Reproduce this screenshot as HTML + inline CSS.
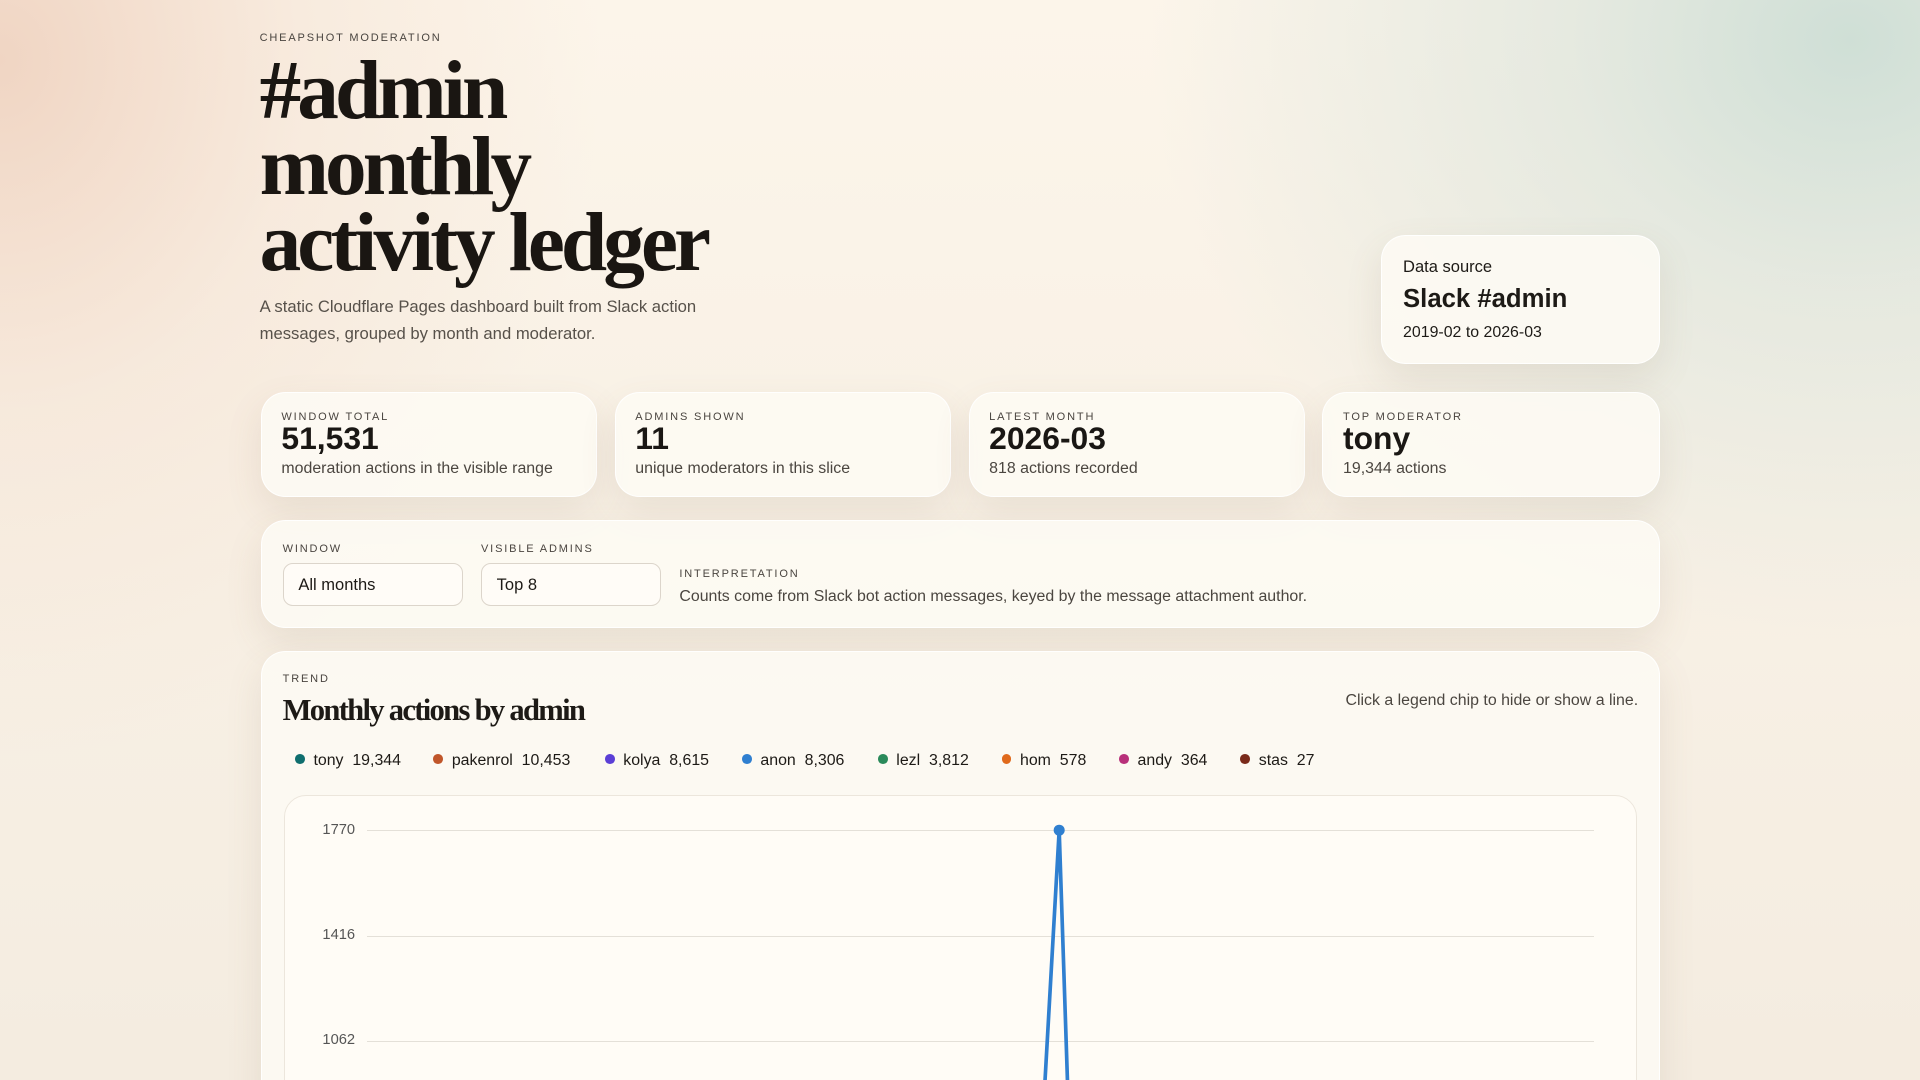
<!DOCTYPE html>
<html><head><meta charset="utf-8"><style>
html,body{margin:0;width:1920px;height:1080px;overflow:hidden}
body{background:#f8efe3;font-family:"Liberation Sans",sans-serif;color:#1d1a16;position:relative}
#bg{position:absolute;left:0;top:0;width:1920px;height:1080px;
background:radial-gradient(ellipse 700px 600px at 1850px 40px,#cfdfd6 0%,rgba(215,226,218,.6) 40%,rgba(250,244,234,0) 100%),
radial-gradient(ellipse 600px 700px at 0px 60px,#f0d5c3 0%,rgba(244,225,210,.5) 50%,rgba(250,244,234,0) 100%),
linear-gradient(180deg,#fcf5ea,#f4ece0)}
#w{position:absolute;left:0;top:0;width:1568px;height:882px;zoom:1.22449;overflow:hidden}
.a{position:absolute}
.card{position:absolute;background:rgba(253,250,244,.88);border:1px solid rgba(255,255,255,.9);border-radius:20px;box-shadow:0 12px 30px rgba(120,100,70,.12)}
.lab{font-size:9px;letter-spacing:1.5px;color:#4a4540}
.big{font-size:26px;font-weight:bold;color:#1a1714;line-height:26px}
.sub{font-size:13px;color:#4b4640}
.sel{position:absolute;width:147px;height:35px;border:1px solid #dcd5cb;border-radius:8px;background:#fffcf7;font-size:13.5px;line-height:35px;padding-left:12px;box-sizing:border-box}
.chip{position:absolute;top:614px;font-size:13px;color:#1d1a16}
.chip i{display:inline-block;width:8px;height:8px;border-radius:50%;margin-right:7px;vertical-align:1px}
.gl{position:absolute;left:300px;width:1002px;height:1px;background:#e4e0d8}
.yl{position:absolute;width:58px;left:232px;text-align:right;font-size:12px;color:#555}
</style></head><body><div id="bg"></div><div id="w">
<div class="a lab" style="left:212px;top:26px">CHEAPSHOT MODERATION</div>
<div class="a" style="left:212px;top:44px;font-family:'Liberation Serif',serif;font-weight:bold;font-size:68px;line-height:62px;letter-spacing:-3.2px;color:#1a1612">#admin<br>monthly<br>activity ledger</div>
<div class="a" style="left:212px;top:240px;font-size:13.6px;line-height:22px;color:#57514a;width:370px">A static Cloudflare Pages dashboard built from Slack action messages, grouped by month and moderator.</div>
<div class="card" style="left:1128px;top:192px;width:226px;height:104px">
<div class="a" style="left:17px;top:17px;font-size:13.5px">Data source</div>
<div class="a" style="left:17px;top:40px;font-size:21px;font-weight:bold">Slack #admin</div>
<div class="a" style="left:17px;top:72px;font-size:13px">2019-02 to 2026-03</div></div>
<div class="card" style="left:213px;top:320px;width:273px;height:84px"><div class="a lab" style="left:16px;top:15px">WINDOW TOTAL</div><div class="a big" style="left:16px;top:25px">51,531</div><div class="a sub" style="left:16px;top:55px">moderation actions in the visible range</div></div>
<div class="card" style="left:502px;top:320px;width:273px;height:84px"><div class="a lab" style="left:16px;top:15px">ADMINS SHOWN</div><div class="a big" style="left:16px;top:25px">11</div><div class="a sub" style="left:16px;top:55px">unique moderators in this slice</div></div>
<div class="card" style="left:791px;top:320px;width:273px;height:84px"><div class="a lab" style="left:16px;top:15px">LATEST MONTH</div><div class="a big" style="left:16px;top:25px">2026-03</div><div class="a sub" style="left:16px;top:55px">818 actions recorded</div></div>
<div class="card" style="left:1080px;top:320px;width:274px;height:84px"><div class="a lab" style="left:16px;top:15px">TOP MODERATOR</div><div class="a big" style="left:16px;top:25px">tony</div><div class="a sub" style="left:16px;top:55px">19,344 actions</div></div>
<div class="card" style="left:213px;top:425px;width:1141px;height:86px">
<div class="a lab" style="left:17px;top:18px">WINDOW</div>
<div class="sel" style="left:17px;top:34px">All months</div>
<div class="a lab" style="left:179px;top:18px">VISIBLE ADMINS</div>
<div class="sel" style="left:179px;top:34px">Top 8</div>
<div class="a lab" style="left:341px;top:38px">INTERPRETATION</div>
<div class="a sub" style="left:341px;top:54px">Counts come from Slack bot action messages, keyed by the message attachment author.</div></div>
<div class="card" style="left:213px;top:532px;width:1141px;height:380px;border-bottom:none;border-radius:20px 20px 0 0">
<div class="a lab" style="left:17px;top:17px">TREND</div>
<div class="a" style="left:17px;top:33px;font-family:'Liberation Serif',serif;font-weight:bold;font-size:25px;letter-spacing:-1.4px">Monthly actions by admin</div>
<div class="a sub" style="right:17px;top:32px">Click a legend chip to hide or show a line.</div></div>
<div class="chip" style="left:241px"><i style="background:#0f6e6e"></i>tony&nbsp; 19,344</div>
<div class="chip" style="left:354px"><i style="background:#c0562a"></i>pakenrol&nbsp; 10,453</div>
<div class="chip" style="left:494px"><i style="background:#5b3fd6"></i>kolya&nbsp; 8,615</div>
<div class="chip" style="left:606px"><i style="background:#2f7fd0"></i>anon&nbsp; 8,306</div>
<div class="chip" style="left:717px"><i style="background:#2a8a5a"></i>lezl&nbsp; 3,812</div>
<div class="chip" style="left:818px"><i style="background:#e06a1c"></i>hom&nbsp; 578</div>
<div class="chip" style="left:914px"><i style="background:#b8307a"></i>andy&nbsp; 364</div>
<div class="chip" style="left:1013px"><i style="background:#7a2a1a"></i>stas&nbsp; 27</div>
<div class="a" style="left:232px;top:649px;width:1103px;height:260px;border:1px solid #ece6dc;border-radius:18px 18px 0 0;background:#fffcf6"></div>
<div class="gl" style="top:678px"></div><div class="gl" style="top:764px"></div><div class="gl" style="top:850px"></div>
<div class="yl" style="top:671px">1770</div><div class="yl" style="top:757px">1416</div><div class="yl" style="top:843px">1062</div>
<svg class="a" style="left:0;top:0" width="1568" height="882"><polyline points="853,890 865,678 872,890" fill="none" stroke="#2f7fd0" stroke-width="3" stroke-linejoin="round"/><circle cx="865" cy="678" r="4.5" fill="#2f7fd0"/></svg>
</div></body></html>
